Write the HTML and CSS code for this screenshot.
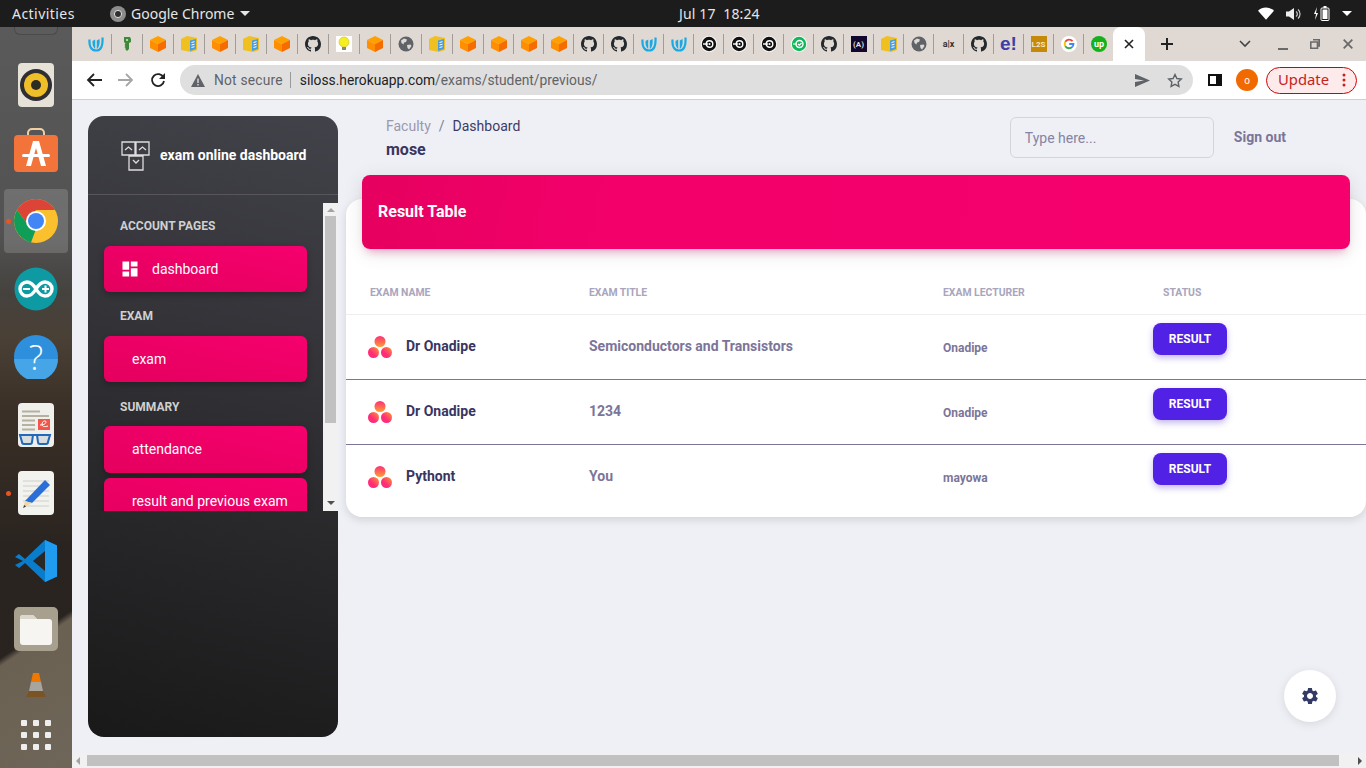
FILE: index.html
```html
<!DOCTYPE html>
<html lang="en">
<head>
	<meta charset="UTF-8">
	<title>exam online dashboard</title>
	<link rel="stylesheet" href="styles.css">
</head>
<body>
	<svg class="defs" width="0" height="0">
		<symbol id="i-u" viewBox="0 0 16 16"><path d="M1.500 3.500C1 10 3 14.500 8 14.500S15 10 14.500 1.500" fill="none" stroke="#1aa9e2" stroke-width="2.200"/><path d="M7.200 13V3.500L4.500 5C4.300 8 4.800 11 7.200 13zM8.800 13V4.500L11.500 3C12 7 11.500 11 8.800 13z" fill="#1aa9e2"/></symbol>
		<symbol id="i-key" viewBox="0 0 16 16"><path d="M5 1h6l1 2v3l-2 1v6l-2 2-1.500-1.500V12l-1-1 1-1-1-1 1-1.500L5 6z" fill="#3f8a3a"/><circle cx="8" cy="4" r="1" fill="#d6efc6"/></symbol>
		<symbol id="i-box" viewBox="0 0 16 16"><path d="M8 0l8 4-8 4-8-4z" fill="#ffa000"/><path d="M0 4l8 4v8l-8-4z" fill="#ff8f00"/><path d="M16 4l-8 4v8l8-4z" fill="#f56c00"/></symbol>
		<symbol id="i-book" viewBox="0 0 16 16"><path d="M0 3l6-3 10 2v12l-6 2-10-2z" fill="#f0bf20"/><path d="M9 4.500l6-1.500v10l-6 2z" fill="#4a9de0"/><path d="M10.500 6.500l3-.8M10.500 9l3-.8M10.500 11.500l3-.8" stroke="#fff" fill="none"/></symbol>
		<symbol id="i-gh" viewBox="0 0 16 16"><path d="M8 0C3.580 0 0 3.580 0 8c0 3.540 2.290 6.530 5.470 7.590.4.070.55-.17.55-.38 0-.19-.01-.82-.01-1.490-2.010.37-2.530-.49-2.690-.94-.09-.23-.48-.94-.82-1.130-.28-.15-.68-.52-.01-.53.63-.01 1.080.58 1.230.82.72 1.210 1.870.87 2.330.66.070-.52.28-.87.51-1.070-1.780-.2-3.640-.89-3.640-3.950 0-.87.31-1.590.82-2.150-.08-.2-.36-1.020.08-2.120 0 0 .67-.21 2.200.82.64-.18 1.320-.27 2-.27.68 0 1.360.09 2 .27 1.530-1.040 2.200-.82 2.200-.82.44 1.100.16 1.920.08 2.120.51.56.82 1.270.82 2.150 0 3.070-1.870 3.750-3.650 3.950.29.25.54.73.54 1.480 0 1.070-.01 1.930-.01 2.200 0 .21.15.46.55.38A8.013 8.013 0 0016 8c0-4.420-3.580-8-8-8z" fill="#24292e"/></symbol>
		<symbol id="i-bulb" viewBox="0 0 16 16"><rect width="16" height="16" fill="#fff"/><circle cx="8" cy="6" r="5" fill="#f5ee20" stroke="#c9bb20" stroke-width=".6"/><rect x="6" y="11" width="4" height="3" fill="#8a8a70"/></symbol>
		<symbol id="i-globe" viewBox="0 0 16 16"><circle cx="8" cy="8" r="7.500" fill="#5f6368"/><path d="M3 4.500l3-2 3 1-1 2.500-2 .5-.5 2L3.500 7zM9 9l3.500-.5 1 1.500-2.500 3.500-1.500-1.500z" fill="#dfd8d3"/></symbol>
		<symbol id="i-ring" viewBox="0 0 16 16"><circle cx="8" cy="8" r="8" fill="#fff"/><circle cx="8" cy="8" r="7.200" fill="#111"/><circle cx="8.500" cy="8" r="3.300" fill="none" stroke="#fff" stroke-width="1.400"/><path d="M2 8h5" stroke="#fff" stroke-width="1.400"/><circle cx="8.500" cy="8" r="1" fill="#fff"/></symbol>
		<symbol id="i-ring-green" viewBox="0 0 16 16"><circle cx="8" cy="8" r="8" fill="#fff"/><circle cx="8" cy="8" r="7.200" fill="#10b85a"/><circle cx="8.500" cy="8" r="3.500" fill="none" stroke="#fff" stroke-width="1.400"/><path d="M2 8h4M7 8l1.300 1.200L10.500 7" stroke="#fff" stroke-width="1.200" fill="none"/></symbol>
		<symbol id="i-google" viewBox="0 0 16 16"><circle cx="8" cy="8" r="8" fill="#fff"/><path d="M11.500 5.200A4.500 4.500 0 0 0 4.300 5.700" fill="none" stroke="#ea4335" stroke-width="1.800"/><path d="M4.300 5.700a4.500 4.500 0 0 0 0 4.600" fill="none" stroke="#fbbc05" stroke-width="1.800"/><path d="M4.300 10.300a4.500 4.500 0 0 0 7 .5" fill="none" stroke="#34a853" stroke-width="1.800"/><path d="M11.300 10.800A4.500 4.500 0 0 0 12.500 8H8.200" fill="none" stroke="#4285f4" stroke-width="1.800"/></symbol>
		<symbol id="i-asana" viewBox="0 0 24 22"><defs><linearGradient id="asana-grad" x1="0" y1="0" x2="0" y2="1"><stop offset="0" stop-color="#ff2d78"/><stop offset="1" stop-color="#ffa030"/></linearGradient><linearGradient id="asana-grad2" x1="1" y1="0" x2="0" y2="1"><stop offset="0" stop-color="#ff9a30"/><stop offset=".6" stop-color="#ff2d78"/></linearGradient></defs><circle cx="12" cy="5.500" r="5.500" fill="url(#asana-grad)"/><circle cx="5.500" cy="16.500" r="5.500" fill="url(#asana-grad2)"/><circle cx="18.500" cy="16.500" r="5.500" fill="url(#asana-grad2)"/></symbol>
		<symbol id="i-gear" viewBox="0 0 24 24"><path d="M19.140 12.940c.04-.3.06-.61.06-.94 0-.32-.02-.64-.07-.94l2.030-1.580a.49.49 0 0 0 .12-.61l-1.920-3.320a.488.488 0 0 0-.59-.22l-2.390.96c-.5-.38-1.030-.7-1.620-.94l-.36-2.540a.484.484 0 0 0-.48-.41h-3.840c-.24 0-.43.17-.47.41l-.36 2.540c-.59.24-1.130.57-1.620.94l-2.390-.96c-.22-.08-.47 0-.59.22L2.740 8.870c-.12.21-.08.47.12.61l2.030 1.580c-.05.3-.09.63-.09.94s.02.64.07.94l-2.030 1.580a.49.49 0 0 0-.12.61l1.920 3.320c.12.22.37.29.59.22l2.390-.96c.5.38 1.030.7 1.620.94l.36 2.540c.05.24.24.41.48.41h3.840c.24 0 .44-.17.47-.41l.36-2.540c.59-.24 1.130-.56 1.620-.94l2.390.96c.22.08.47 0 .59-.22l1.920-3.320c.12-.22.07-.47-.12-.61l-2.010-1.580zM12 15.600c-1.980 0-3.600-1.620-3.600-3.600s1.620-3.600 3.600-3.600 3.600 1.620 3.600 3.600-1.620 3.600-3.600 3.600z" fill="#343a66"/></symbol>
	</svg>

	<div class="topbar">
		<span class="activities">Activities</span>
		<svg class="app-icon" width="16" height="16" viewBox="0 0 16 16"><circle cx="8" cy="8" r="8" fill="#8c8c8c"/><circle cx="8" cy="8" r="3.600" fill="#2f2f2f" stroke="#e0e0e0"/></svg>
		<span class="app-name">Google Chrome</span>
		<span class="caret"></span>
		<span class="clock">Jul 17&nbsp; 18:24</span>
		<div class="tray">
			<svg width="16" height="13" viewBox="0 0 18 14"><path d="M0 4a13 13 0 0 1 18 0L9 14z" fill="#fff"/></svg>
			<svg width="16" height="14" viewBox="0 0 16 14"><path d="M0 4.500h3L8 1v12L3 9.500H0z" fill="#eee"/><path d="M10 4.500a3 3 0 0 1 0 5M12 2.500a6 6 0 0 1 0 9" stroke="#ccc" stroke-width="1.200" fill="none"/></svg>
			<svg width="16" height="15" viewBox="0 0 16 15"><path d="M3 1L0 8h2l-1 6 3-7H2z" fill="#fff"/><rect x="7" y="2" width="8" height="12.500" rx="1" fill="none" stroke="#fff"/><rect x="9.500" y="0" width="3" height="2" fill="#fff"/><rect x="8.500" y="3.500" width="5" height="9.500" fill="#fff"/></svg>
			<span class="caret tray-caret"></span>
		</div>
	</div>

	<div class="desktop">
		<div class="dock">
			<div class="dock-stub"></div>
			<div class="dock-item rhythmbox">
				<svg width="36" height="44" viewBox="0 0 36 44"><rect width="36" height="44" rx="4" fill="#e6e2d8"/><circle cx="18" cy="22" r="16" fill="#2f2e33"/><circle cx="18" cy="22" r="12" fill="#eebf28"/><circle cx="18" cy="22" r="5" fill="#2c2b26"/></svg>
			</div>
			<div class="dock-item store">
				<svg width="44" height="46" viewBox="0 0 44 46"><path d="M14 8V5a4 4 0 0 1 4-4h8a4 4 0 0 1 4 4v3" fill="none" stroke="#f0cfa5" stroke-width="2"/><rect y="7" width="44" height="37" rx="4" fill="#f2743a"/><path d="M19 13h6l7 25h-5l-5-18-5 18h-5z" fill="#fff"/><rect x="8" y="26" width="28" height="3" rx="1.500" fill="#fff"/></svg>
			</div>
			<div class="dock-item chrome">
				<span class="run-dot"></span>
				<svg width="44" height="44" viewBox="0 0 44 44"><circle cx="22" cy="22" r="22" fill="#fbc02d"/><path d="M3 11A22 22 0 0 1 41 11H22L14 26Z" fill="#db4437"/><path d="M3 11L14 26 22 30 17 43.400A22 22 0 0 1 3 11Z" fill="#0f9d58"/><circle cx="22" cy="22" r="10" fill="#fff"/><circle cx="22" cy="22" r="8" fill="#4285f4"/></svg>
			</div>
			<div class="dock-item arduino">
				<svg width="44" height="44" viewBox="0 0 44 44"><circle cx="22" cy="22" r="21.500" fill="#0e9aa2"/><path d="M22 22c-3-5-6-7-9-7a7 7 0 0 0 0 14c3 0 6-2 9-7 3-5 6-7 9-7a7 7 0 0 1 0 14c-3 0-6-2-9-7z" fill="none" stroke="#fff" stroke-width="3.400"/><path d="M9 22h7M28 22h7M31.500 18.500v7" stroke="#fff" stroke-width="2"/></svg>
			</div>
			<div class="dock-item help">
				<svg width="44" height="44" viewBox="0 0 44 44"><circle cx="22" cy="22" r="22" fill="#2e8fdc"/><path d="M0 24h44a22 22 0 0 1-44 0z" fill="#46a5e6"/><text x="22" y="35" text-anchor="middle" class="help-mark">?</text></svg>
			</div>
			<div class="dock-item viewer">
				<svg width="36" height="44" viewBox="0 0 36 44"><rect width="36" height="44" rx="4" fill="#efefeb"/><path d="M4 8.500h18M4 13h27M4 17.500h13M4 22h13M4 26.500h13" stroke="#b5b0a0" stroke-width="2"/><rect x="20" y="16" width="12" height="11" fill="#f0564a"/><path d="M22 22c3 0 6-1 6-3s-4-1-4 2 3 3 6 2" stroke="#fff" fill="none"/><path d="M2 32h30" stroke="#2468b8" stroke-width="2"/><path d="M2 32h13l-1 7a2 2 0 0 1-2 2H6a2 2 0 0 1-2-2zM19 32h13l-2 7a2 2 0 0 1-2 2h-6a2 2 0 0 1-2-2z" fill="#d8dde0" stroke="#2468b8" stroke-width="2"/></svg>
			</div>
			<div class="dock-item writer">
				<span class="run-dot"></span>
				<svg width="36" height="44" viewBox="0 0 36 44"><rect width="36" height="44" rx="4" fill="#f2f2ef"/><path d="M5 10h26M5 15h26M5 20h26M5 25h26M5 30h26M5 35h26" stroke="#cfcfc9"/><path d="M27 9l5 5-18 18-7-2z" fill="#2a6fd8"/><path d="M7 30l7 2-9 5z" fill="#f0d7a8"/><path d="M5 37l1.500-3 1.500 1.500z" fill="#333"/></svg>
			</div>
			<div class="dock-item vscode">
				<svg width="42" height="42" viewBox="0 0 42 42"><path d="M30 0l12 5.500v31L30 42 10 23l-6 5-4-3 8-4-8-4 4-3 6 5z" fill="#0a7ccc"/><path d="M30 0l12 5.500v31L30 42z" fill="#1f9cf0"/><path d="M30 11L18 21l12 10z" fill="#2b2724"/></svg>
			</div>
			<div class="dock-item files">
				<svg width="44" height="44" viewBox="0 0 44 44"><rect width="44" height="44" rx="5" fill="#a8a08e"/><path d="M6 11a3 3 0 0 1 3-3h10l4 4h12a3 3 0 0 1 3 3v20a3 3 0 0 1-3 3H9a3 3 0 0 1-3-3z" fill="#f6f5f2"/><path d="M6 11a3 3 0 0 1 3-3h10l4 4H6z" fill="#dbd7cc"/></svg>
			</div>
			<div class="dock-item vlc">
				<svg width="20" height="24" viewBox="0 0 20 24"><path d="M7 0h6l2 9H5z" fill="#f07800"/><path d="M5 9h10l2 9H3z" fill="#a8a49e"/><path d="M0 24l3-6h14l3 6z" fill="#7a5424"/></svg>
			</div>
			<div class="dock-grid">
				<i></i><i></i><i></i><i></i><i></i><i></i><i></i><i></i><i></i>
			</div>
		</div>

		<div class="browser">
			<div class="tabstrip">
				<span class="tab"><svg class="fav"><use href="#i-u"/></svg></span>
				<span class="tab"><svg class="fav"><use href="#i-key"/></svg></span>
				<span class="tab"><svg class="fav"><use href="#i-box"/></svg></span>
				<span class="tab"><svg class="fav"><use href="#i-book"/></svg></span>
				<span class="tab"><svg class="fav"><use href="#i-box"/></svg></span>
				<span class="tab"><svg class="fav"><use href="#i-book"/></svg></span>
				<span class="tab"><svg class="fav"><use href="#i-box"/></svg></span>
				<span class="tab"><svg class="fav"><use href="#i-gh"/></svg></span>
				<span class="tab"><svg class="fav"><use href="#i-bulb"/></svg></span>
				<span class="tab"><svg class="fav"><use href="#i-box"/></svg></span>
				<span class="tab"><svg class="fav"><use href="#i-globe"/></svg></span>
				<span class="tab"><svg class="fav"><use href="#i-book"/></svg></span>
				<span class="tab"><svg class="fav"><use href="#i-box"/></svg></span>
				<span class="tab tab-n"><svg class="fav"><use href="#i-box"/></svg></span>
				<span class="tab tab-n"><svg class="fav"><use href="#i-box"/></svg></span>
				<span class="tab tab-n"><svg class="fav"><use href="#i-box"/></svg></span>
				<span class="tab tab-n"><svg class="fav"><use href="#i-gh"/></svg></span>
				<span class="tab tab-n"><svg class="fav"><use href="#i-gh"/></svg></span>
				<span class="tab tab-n"><svg class="fav"><use href="#i-u"/></svg></span>
				<span class="tab tab-n"><svg class="fav"><use href="#i-u"/></svg></span>
				<span class="tab tab-n"><svg class="fav"><use href="#i-ring"/></svg></span>
				<span class="tab tab-n"><svg class="fav"><use href="#i-ring"/></svg></span>
				<span class="tab tab-n"><svg class="fav"><use href="#i-ring"/></svg></span>
				<span class="tab tab-n"><svg class="fav"><use href="#i-ring-green"/></svg></span>
				<span class="tab tab-n"><svg class="fav"><use href="#i-gh"/></svg></span>
				<span class="tab tab-n"><span class="fav-text fav-dark">(A)</span></span>
				<span class="tab tab-n"><svg class="fav"><use href="#i-book"/></svg></span>
				<span class="tab tab-n"><svg class="fav"><use href="#i-globe"/></svg></span>
				<span class="tab tab-n"><span class="fav-text fav-alx">a|x</span></span>
				<span class="tab tab-n"><svg class="fav"><use href="#i-gh"/></svg></span>
				<span class="tab tab-n"><span class="fav-text fav-e">e!</span></span>
				<span class="tab tab-n"><span class="fav-text fav-l2s">L2S</span></span>
				<span class="tab tab-n"><svg class="fav"><use href="#i-google"/></svg></span>
				<span class="tab tab-n tab-last"><span class="fav-text fav-up">up</span></span>
				<span class="tab-active">
					<svg width="10" height="10" viewBox="0 0 10 10"><path d="M1 1l8 8M9 1l-8 8" stroke="#222" stroke-width="1.600"/></svg>
				</span>
				<svg class="new-tab" width="12" height="12" viewBox="0 0 12 12"><path d="M6 0v12M0 6h12" stroke="#222" stroke-width="2"/></svg>
				<svg class="tab-search" width="12" height="8" viewBox="0 0 12 8"><path d="M1 1l5 5 5-5" stroke="#444" stroke-width="1.600" fill="none"/></svg>
				<svg class="win-min" width="10" height="2" viewBox="0 0 10 2"><rect width="10" height="2" fill="#6a6a6a"/></svg>
				<svg class="win-max" width="10" height="10" viewBox="0 0 10 10"><path d="M3 .8h6.200V7H7.500M.8 3h6.700v6.200H.8z" fill="none" stroke="#6a6a6a" stroke-width="1.600"/></svg>
				<svg class="win-close" width="10" height="10" viewBox="0 0 10 10"><path d="M.7.7l8.600 8.600M9.300.7L.7 9.300" stroke="#6a6a6a" stroke-width="1.800"/></svg>
			</div>

			<div class="toolbar">
				<svg class="tool-back" width="16" height="14" viewBox="0 0 16 14"><path d="M16 7H2M8 1L2 7l6 6" stroke="#222" stroke-width="1.800" fill="none"/></svg>
				<svg class="tool-fwd" width="16" height="14" viewBox="0 0 16 14"><path d="M0 7h14M8 1l6 6-6 6" stroke="#a6a6a6" stroke-width="1.800" fill="none"/></svg>
				<svg class="tool-reload" width="16" height="16" viewBox="0 0 16 16"><path d="M13.500 5.500A6 6 0 1 0 14 9" stroke="#222" stroke-width="1.800" fill="none"/><path d="M15 1v6H9z" fill="#222"/></svg>
				<div class="omnibox">
					<svg width="14" height="13" viewBox="0 0 14 13"><path d="M7 0l7 13H0z" fill="#5f6368"/><path d="M6.300 4.500h1.400v4.500H6.300zM6.300 10h1.400v1.400H6.300z" fill="#dfdfdf"/></svg>
					<span class="not-secure">Not secure</span>
					<span class="omni-sep"></span>
					<span class="url"><b>siloss.herokuapp.com</b>/exams/student/previous/</span>
					<svg class="omni-send" width="15" height="13" viewBox="0 0 15 13"><path d="M0 0l15 6.500L0 13V8l9-1.500L0 5z" fill="#5f6368"/></svg>
					<svg class="omni-star" width="16" height="15" viewBox="0 0 16 15"><path d="M8 1.500l1.900 4 4.400.5-3.200 3 .8 4.400L8 11.300l-3.900 2.100.8-4.400-3.200-3 4.400-.5z" fill="none" stroke="#5f6368" stroke-width="1.400"/></svg>
				</div>
				<svg class="tool-panel" width="14" height="12" viewBox="0 0 14 12"><path d="M0 0h14v12H0z" fill="#111"/><rect x="2" y="2" width="6" height="8" fill="#fff"/></svg>
				<span class="avatar">o</span>
				<div class="update">
					<span class="update-label">Update</span>
					<svg width="4" height="14" viewBox="0 0 4 14"><circle cx="2" cy="2" r="1.500" fill="#c5221f"/><circle cx="2" cy="7" r="1.500" fill="#c5221f"/><circle cx="2" cy="12" r="1.500" fill="#c5221f"/></svg>
				</div>
			</div>

			<div class="page">
				<div class="page-body">
					<aside class="sidebar">
						<div class="brand">
							<svg width="30" height="30" viewBox="0 0 30 30"><path d="M1 1h13v13H1zM15 1h13v13H15zM8 15h14v14H8z" fill="none" stroke="#ddd" stroke-width="1.300"/><path d="M4 9l3.500-3L11 9M18 9l3.500-3L25 9M12 19l3 3 3-3" fill="none" stroke="#ddd" stroke-width="1.300"/></svg>
							<span>exam online dashboard</span>
						</div>
						<div class="side-scroll">
							<nav class="side-nav">
								<h6 class="side-label side-label-first">ACCOUNT PAGES</h6>
								<a class="side-link">
									<svg width="20" height="20" viewBox="0 0 24 24"><path d="M3 13h8V3H3v10zm0 8h8v-6H3v6zm10 0h8V11h-8v10zm0-18v6h8V3h-8z" fill="#fff"/></svg>
									<span>dashboard</span>
								</a>
								<h6 class="side-label">EXAM</h6>
								<a class="side-link">exam</a>
								<h6 class="side-label side-label-3">SUMMARY</h6>
								<a class="side-link side-link-tall">attendance</a>
								<a class="side-link side-link-next">result and previous exam</a>
							</nav>
							<div class="side-bar">
								<span class="arrow-up"></span>
								<span class="side-thumb"></span>
								<span class="arrow-down"></span>
							</div>
						</div>
					</aside>

					<main class="main">
						<div class="topnav">
							<div class="crumbs">
								<div class="crumb-line"><span class="crumb-dim">Faculty</span><span class="crumb-slash">/</span><span>Dashboard</span></div>
								<div class="crumb-user">mose</div>
							</div>
							<input class="search" type="text" placeholder="Type here...">
							<span class="signout">Sign out</span>
						</div>

						<section class="card">
							<div class="card-head">Result Table</div>
							<table class="results">
								<thead>
									<tr><th class="col-name">EXAM NAME</th><th class="col-title">EXAM TITLE</th><th class="col-lect">EXAM LECTURER</th><th class="col-status">STATUS</th></tr>
								</thead>
								<tbody>
									<tr>
										<td><div class="exam-name"><svg width="24" height="22"><use href="#i-asana"/></svg><span>Dr Onadipe</span></div></td>
										<td class="exam-title">Semiconductors and Transistors</td>
										<td class="exam-lect">Onadipe</td>
										<td class="exam-act"><button class="btn-result">RESULT</button></td>
									</tr>
									<tr>
										<td><div class="exam-name"><svg width="24" height="22"><use href="#i-asana"/></svg><span>Dr Onadipe</span></div></td>
										<td class="exam-title">1234</td>
										<td class="exam-lect">Onadipe</td>
										<td class="exam-act"><button class="btn-result">RESULT</button></td>
									</tr>
									<tr>
										<td><div class="exam-name"><svg width="24" height="22"><use href="#i-asana"/></svg><span>Pythont</span></div></td>
										<td class="exam-title">You</td>
										<td class="exam-lect">mayowa</td>
										<td class="exam-act"><button class="btn-result">RESULT</button></td>
									</tr>
								</tbody>
							</table>
						</section>
					</main>
				</div>

				<div class="page-hbar">
					<span class="arrow-left"></span>
					<span class="page-thumb"></span>
					<span class="arrow-right"></span>
				</div>

				<div class="fab"><svg width="20" height="20"><use href="#i-gear"/></svg></div>
			</div>
		</div>
	</div>
</body>
</html>
```

FILE: styles.css
```css
*{
	margin: 0;
	padding: 0;
	box-sizing: border-box;
}
html, body{
	width: 1366px;
	height: 768px;
	overflow: hidden;
}
body{
	font-family: "Roboto", "Liberation Sans", sans-serif;
	background: #eff0f5;
}
.defs{
	position: absolute;
}

/* gnome top bar */
.topbar{
	height: 27px;
	background: #1c1c1c;
	color: #e6e6e6;
	display: flex;
	align-items: center;
	font-family: "Noto Sans", sans-serif;
	font-size: 14px;
}
.activities{
	margin-left: 12px;
	width: 98px;
	letter-spacing: .45px;
}
.app-icon{
	margin-right: 5px;
}
.app-name{
	width: 109px;
}
.caret{
	width: 0;
	height: 0;
	border-left: 5px solid transparent;
	border-right: 5px solid transparent;
	border-top: 5px solid #e6e6e6;
}
.clock{
	margin-left: 429px;
	width: 82px;
	white-space: nowrap;
	letter-spacing: .15px;
}
.tray{
	margin-left: auto;
	display: flex;
	align-items: center;
	gap: 12px;
	padding-right: 14px;
}
.tray-caret{
	border-top-color: #fff;
}

/* dock */
.desktop{
	display: flex;
	height: 741px;
}
.dock{
	width: 72px;
	flex: none;
	display: flex;
	flex-direction: column;
	align-items: center;
	background:
		linear-gradient(146deg, rgba(0,0,0,0) 80%, #6b6152 81%, #6e6659 100%),
		linear-gradient(180deg, #5a5a5a 0%, #525252 28%, #45423e 36%, #4a4035 42%, #3a2f26 52%, #2a2420 70%, #282321 100%);
}
.dock-stub{
	width: 44px;
	height: 8px;
	flex: none;
	border: 1px solid #4a4a4a;
	border-top: 0;
	border-radius: 0 0 6px 6px;
	background: #5c5c5c;
}
.dock-item{
	flex: none;
	display: flex;
	justify-content: center;
	align-items: center;
	position: relative;
	width: 64px;
}
.rhythmbox{
	height: 44px;
	margin-top: 28px;
}
.store{
	height: 46px;
	margin-top: 21px;
}
.chrome{
	height: 64px;
	margin-top: 15px;
	background: rgba(255,255,255,.16);
	border-radius: 4px;
}
.arduino{
	height: 44px;
	margin-top: 14px;
}
.help{
	height: 44px;
	margin-top: 24px;
}
.viewer{
	height: 44px;
	margin-top: 24px;
}
.writer{
	height: 44px;
	margin-top: 24px;
}
.vscode{
	height: 42px;
	margin-top: 25px;
}
.files{
	height: 44px;
	margin-top: 25px;
}
.vlc{
	height: 24px;
	margin-top: 22px;
}
.run-dot{
	position: absolute;
	left: 2px;
	top: 50%;
	width: 5px;
	height: 5px;
	margin-top: -2px;
	border-radius: 50%;
	background: #e95420;
}
.help-mark{
	font-family: "Open Sans", sans-serif;
	font-size: 34px;
	font-weight: 300;
	fill: #fff;
}
.dock-grid{
	display: grid;
	grid-template-columns: repeat(3, 6px);
	gap: 6px;
	margin-top: 23px;
}
.dock-grid i{
	width: 6px;
	height: 6px;
	border-radius: 1px;
	background: #eee;
}

/* browser window */
.browser{
	flex: 1;
	display: flex;
	flex-direction: column;
	min-width: 0;
}
.tabstrip{
	height: 34px;
	background: #dfd8d3;
	display: flex;
	align-items: center;
	padding-left: 9px;
}
.tab{
	width: 31px;
	height: 20px;
	flex: none;
	display: flex;
	align-items: center;
	justify-content: center;
	border-right: 1px solid #a19c98;
}
.tab-n{
	width: 30px;
}
.tab-last{
	border-right: 0;
}
.fav{
	width: 16px;
	height: 16px;
}
.fav-text{
	width: 16px;
	height: 16px;
	display: flex;
	align-items: center;
	justify-content: center;
	font-weight: 700;
	white-space: nowrap;
}
.fav-dark{
	background: #12082e;
	color: #ddd;
	font-size: 8px;
}
.fav-alx{
	color: #333;
	font-size: 9px;
}
.fav-e{
	color: #3b3fa8;
	font-family: "Liberation Sans", sans-serif;
	font-size: 19px;
}
.fav-l2s{
	background: #c68a08;
	color: #f6e6c0;
	font-size: 8px;
}
.fav-up{
	background: #14b11a;
	color: #fff;
	border-radius: 50%;
	font-size: 9px;
}
.tab-active{
	width: 32px;
	height: 34px;
	flex: none;
	margin-left: -1px;
	margin-right: 16px;
	align-self: flex-end;
	background: #fff;
	border-radius: 8px 8px 0 0;
	display: flex;
	align-items: center;
	justify-content: center;
}
.new-tab{
	margin-right: 66px;
}
.tab-search{
	margin-right: 27px;
}
.win-min{
	margin-top: 10px;
	margin-right: 22px;
}
.win-max{
	margin-right: 23px;
}

.toolbar{
	height: 39px;
	background: #fff;
	border-bottom: 1px solid #cfcfcf;
	display: flex;
	align-items: center;
	padding-left: 14px;
}
.tool-back{
	margin-right: 16px;
}
.tool-fwd{
	margin-right: 16px;
}
.tool-reload{
	margin-right: 14px;
}
.omnibox{
	width: 1013px;
	height: 30px;
	background: #dfdfdf;
	border-radius: 15px;
	display: flex;
	align-items: center;
	padding-left: 11px;
	font-size: 13.800px;
	color: #5c5c5c;
}
.not-secure{
	margin-left: 9px;
	color: #5f6368;
	letter-spacing: .2px;
}
.omni-sep{
	width: 1px;
	height: 16px;
	background: #9a9a9a;
	margin: 0 9px 0 7px;
}
.url b{
	font-weight: 400;
	color: #202124;
}
.url{
	color: #5f6368;
}
.omni-send{
	margin-left: auto;
}
.omni-star{
	margin-left: 17px;
	margin-right: 10px;
}
.tool-panel{
	margin-left: 15px;
}
.avatar{
	width: 22px;
	height: 22px;
	margin-left: 14px;
	border-radius: 50%;
	background: #f16a00;
	color: #fff;
	font-size: 10px;
	display: flex;
	align-items: center;
	justify-content: center;
}
.update{
	width: 91px;
	height: 27px;
	margin-left: 8px;
	border: 1px solid #d60000;
	border-radius: 14px;
	background: #fdeaea;
	color: #c5221f;
	font-family: "Noto Sans", sans-serif;
	font-size: 14.800px;
	display: flex;
	align-items: center;
	justify-content: space-between;
	padding: 0 10px 0 11px;
}
.update-label{
	margin-top: -2px;
}

/* page */
.page{
	flex: 1;
	display: flex;
	flex-direction: column;
	min-height: 0;
	position: relative;
}
.page-body{
	flex: 1;
	display: flex;
	min-height: 0;
	padding-left: 16px;
}
.sidebar{
	width: 250px;
	height: 621px;
	margin-top: 16px;
	flex: none;
	border-radius: 16px;
	background: linear-gradient(195deg, #42424a, #191919);
}
.brand{
	height: 79px;
	border-bottom: 1px solid #57565d;
	display: flex;
	align-items: center;
	padding: 0 0 0 33px;
	color: #fff;
	font-size: 14px;
	font-weight: 700;
}
.brand svg{
	margin-right: 9px;
	margin-top: 1px;
}
.side-scroll{
	height: 308px;
	margin-top: 8px;
	display: flex;
	overflow: hidden;
}
.side-nav{
	width: 235px;
	flex: none;
	padding-left: 16px;
}
.side-label{
	height: 15px;
	margin: 17px 0 12px 16px;
	color: #d0d0d0;
	font-size: 12px;
	line-height: 15px;
	font-weight: 700;
}
.side-label-first{
	margin-top: 16px;
}
.side-label-3{
	margin-top: 18px;
	margin-bottom: 11px;
}
.side-link{
	width: 203px;
	height: 46px;
	display: flex;
	align-items: center;
	padding-left: 28px;
	border-radius: 6px;
	background: linear-gradient(to top right, #e4005e, #f6006e);
	box-shadow: 0 3px 6px rgba(0,0,0,.25);
	color: #fff;
	font-size: 14px;
}
.side-link svg{
	margin-left: -12px;
	margin-right: 12px;
}
.side-link-tall{
	height: 47px;
	padding-bottom: 1px;
}
.side-link-next{
	margin-top: 5px;
}
.side-bar{
	width: 15px;
	background: #f1f1f1;
	display: flex;
	flex-direction: column;
	align-items: center;
}
.side-thumb{
	width: 11px;
	height: 207px;
	margin-top: 4px;
	background: #c1c1c1;
}
.arrow-up, .arrow-down{
	width: 0;
	height: 0;
	border-left: 4px solid transparent;
	border-right: 4px solid transparent;
}
.arrow-up{
	margin-top: 5px;
	border-bottom: 4px solid #a3a3a3;
}
.arrow-down{
	margin-top: auto;
	margin-bottom: 6px;
	border-top: 4px solid #505050;
}

.main{
	width: 1020px;
	flex: none;
	margin-left: 8px;
}
.topnav{
	height: 99px;
	display: flex;
	padding-left: 40px;
	padding-right: 80px;
}
.crumbs{
	margin-top: 17px;
	margin-right: auto;
}
.crumb-line{
	height: 18px;
	font-size: 14px;
	line-height: 18px;
	color: #3d3a66;
}
.crumb-dim{
	color: #9a98ae;
}
.crumb-slash{
	margin: 0 8px;
	color: #7b809a;
}
.crumb-user{
	margin-top: 5px;
	font-size: 16px;
	font-weight: 700;
	color: #39355f;
}
.search{
	width: 204px;
	height: 41px;
	margin-top: 17px;
	padding: 0 14px;
	border: 1px solid #d2d6da;
	border-radius: 6px;
	background: transparent;
	font-family: "Roboto", sans-serif;
	font-size: 14px;
	color: #7b7599;
}
.search::placeholder{
	color: #8683a3;
	opacity: 1;
}
.signout{
	margin-left: 20px;
	margin-top: 29px;
	font-size: 14px;
	font-weight: 700;
	color: #7b7599;
}

.card{
	height: 318px;
	background: #fff;
	border-radius: 16px;
	box-shadow: 0 3px 8px rgba(0,0,0,.12);
}
.card-head{
	position: relative;
	top: -24px;
	height: 74px;
	margin: 0 16px;
	padding-left: 16px;
	padding-bottom: 1px;
	display: flex;
	align-items: center;
	border-radius: 8px;
	background: linear-gradient(100deg, #e6005f, #f3006b 25%, #f6006e);
	box-shadow: 0 4px 20px rgba(0,0,0,.1), 0 7px 10px -5px rgba(233,0,100,.35);
	color: #fff;
	font-size: 16px;
	font-weight: 700;
}
.results{
	width: 1020px;
	margin-top: -9px;
	border-collapse: collapse;
	table-layout: fixed;
}
.results th{
	height: 50px;
	padding-left: 24px;
	padding-top: 7px;
	border-bottom: 1px solid #eeeeee;
	text-align: left;
	font-size: 10.400px;
	font-weight: 700;
	color: #a8a5bd;
}
.col-name{
	width: 219px;
}
.col-title{
	width: 354px;
}
.col-lect{
	width: 220px;
}
.results td{
	height: 65px;
	padding-left: 24px;
	font-size: 14px;
	font-weight: 700;
	border-bottom: 1px solid #7b7599;
}
.results tr:last-child td{
	border-bottom: 0;
}
.exam-name{
	display: flex;
	align-items: center;
	gap: 14px;
	margin-left: -2px;
	color: #39355f;
}
.exam-name span{
	margin-top: -2px;
}
.results .exam-title{
	padding-bottom: 2px;
	color: #7b7599;
}
.results .exam-lect{
	padding-top: 3px;
	font-size: 12px;
	color: #7b7599;
}
.results .exam-act{
	padding-left: 14px;
	padding-top: 8px;
	vertical-align: top;
}
.btn-result{
	width: 74px;
	height: 32px;
	display: block;
	border: 0;
	border-radius: 8px;
	background: #5221e6;
	box-shadow: 0 3px 6px rgba(60,20,200,.3);
	color: #fff;
	font-family: "Roboto", sans-serif;
	font-size: 12px;
	font-weight: 700;
}

.page-hbar{
	height: 15px;
	flex: none;
	background: #f1f1f1;
	display: flex;
	align-items: center;
	padding: 0 4px;
}
.page-thumb{
	width: 1252px;
	height: 11px;
	margin: 0 auto 0 7px;
	background: #c1c1c1;
}
.arrow-left, .arrow-right{
	width: 0;
	height: 0;
	border-top: 4px solid transparent;
	border-bottom: 4px solid transparent;
}
.arrow-left{
	border-right: 4px solid #a3a3a3;
}
.arrow-right{
	border-left: 4px solid #505050;
}
.fab{
	position: absolute;
	left: 1212px;
	top: 570px;
	width: 52px;
	height: 52px;
	border-radius: 50%;
	background: #fff;
	box-shadow: 0 2px 10px rgba(0,0,0,.1);
	display: flex;
	align-items: center;
	justify-content: center;
}
```
